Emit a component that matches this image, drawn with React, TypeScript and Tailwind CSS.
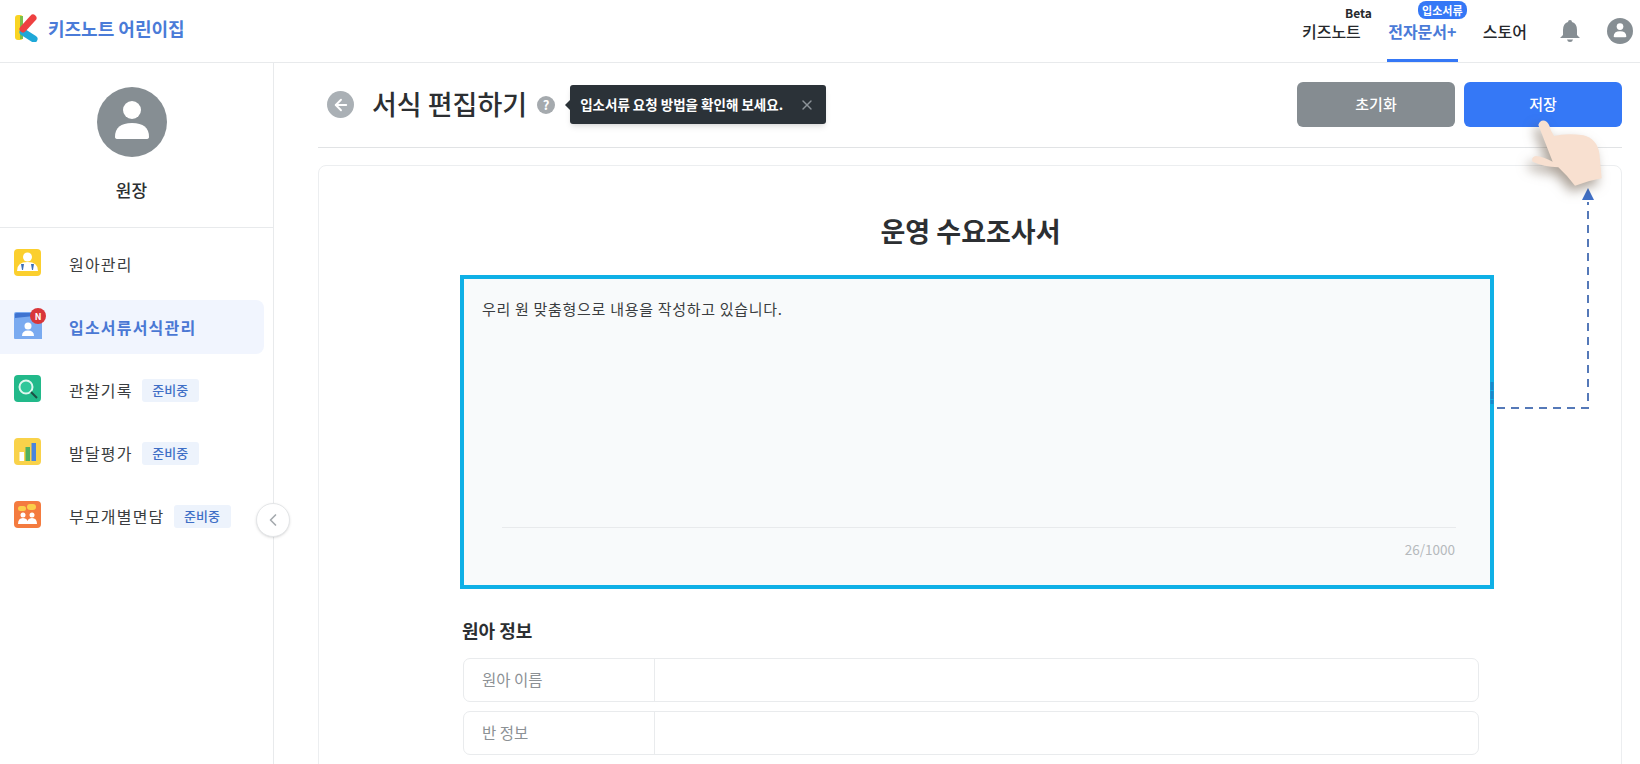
import { ChevronLeft, X, ArrowLeft } from "lucide-react";

const fontClassName = "font-['Noto_Sans_CJK_KR','Noto_Sans',sans-serif]";

function Logo() {
  return (
    <svg width="26" height="28" viewBox="0 0 26 28" className="mr-[8px]">
      <rect x="1" y="1" width="8" height="25" rx="3" fill="#f9d423" />
      <rect x="6" y="2" width="3" height="23" fill="#7cc04b" />
      <path d="M9 18 L20 25" stroke="#1fa8d8" strokeWidth="7" strokeLinecap="round" />
      <path d="M9 15 L19 4" stroke="#ee4040" strokeWidth="7" strokeLinecap="round" />
    </svg>
  );
}

function PersonAvatar({ size }: { size: number }) {
  return (
    <svg width={size} height={size} viewBox="0 0 70 70">
      <circle cx="35" cy="35" r="35" fill="#868e93" />
      <circle cx="35" cy="23" r="9" fill="#fff" />
      <path d="M18 50 Q18 36 35 36 Q52 36 52 50 Q52 52 49 52 L21 52 Q18 52 18 50 Z" fill="#fff" />
    </svg>
  );
}

function ChildIcon() {
  return (
    <svg width="27" height="27" viewBox="0 0 27 27">
      <rect width="27" height="27" rx="4" fill="#fbcf2e" />
      <circle cx="13.5" cy="8" r="4.5" fill="#fff" />
      <path d="M3 22 Q3 13 13.5 13 Q24 13 24 22 Z" fill="#fff" />
      <path d="M7 15 h3 l-1 6 h-1 Z M17 15 h3 l-1 6 h-1 Z" fill="#3d6fb8" />
    </svg>
  );
}

function FolderIcon() {
  return (
    <svg width="28" height="27" viewBox="0 0 28 27" className="overflow-visible">
      <path d="M0 2 Q0 0 2 0 L18 0 L22 4 L28 4 L28 27 L1 27 Q0 27 0 26 Z" fill="#7aaaf0" />
      <path d="M1 6 L1 2 Q1 1 3 1 L17 1 L20 4 Z" fill="#3f73d0" />
      <circle cx="14" cy="14" r="3.500" fill="#fff" />
      <path d="M8 24 Q8 18.500 14 18.500 Q20 18.500 20 24 Z" fill="#fff" />
      <circle cx="24" cy="4" r="8" fill="#d9363a" />
      <text x="24" y="7.500" textAnchor="middle" fontSize="9" fontWeight="700" fill="#fff">
        N
      </text>
    </svg>
  );
}

function SearchIcon() {
  return (
    <svg width="27" height="27" viewBox="0 0 27 27">
      <rect width="27" height="27" rx="4" fill="#22b98a" />
      <circle cx="12" cy="12" r="6.500" fill="#2fc79a" stroke="#dff7ef" strokeWidth="2" />
      <path d="M17 17 L23 23" stroke="#1d4f45" strokeWidth="2" />
    </svg>
  );
}

function ChartIcon() {
  return (
    <svg width="27" height="27" viewBox="0 0 27 27">
      <rect width="27" height="27" rx="4" fill="#f9d24a" />
      <rect x="5.500" y="14" width="4.500" height="9" fill="#fff" />
      <rect x="11.500" y="9" width="4.500" height="14" fill="#4fb060" />
      <rect x="17.500" y="5" width="4.500" height="18" fill="#4a84dc" />
    </svg>
  );
}

function ParentIcon() {
  return (
    <svg width="27" height="27" viewBox="0 0 27 27">
      <rect width="27" height="27" rx="4" fill="#f47b3f" />
      <rect x="4" y="5" width="8" height="5" rx="2.500" fill="#fbcf4a" />
      <rect x="13" y="3" width="9" height="6" rx="3" fill="#fbcf4a" />
      <circle cx="9" cy="14" r="2.500" fill="#fff" />
      <circle cx="18" cy="14" r="2.500" fill="#fff" />
      <path d="M4 23 Q4 17 9 17 Q14 17 14 23 Z M13 23 Q13 17 18 17 Q23 17 23 23 Z" fill="#fff" />
    </svg>
  );
}

function SoonBadge() {
  return (
    <span className="ml-[9px] flex h-[23px] w-[57px] items-center justify-center rounded-[3px] bg-[#edf3fc] text-[13px] font-medium text-[#3f6fc6]">
      준비중
    </span>
  );
}

function NavItem({ icon, label, active, soon }: { icon: React.ReactNode; label: string; active?: boolean; soon?: boolean }) {
  return (
    <div className={`flex h-[54px] w-[264px] items-center rounded-r-[8px] pl-[14px] ${active ? "bg-[#f1f5fe]" : ""}`}>
      <div className="mb-[4px] flex w-[55px] items-center">{icon}</div>
      <span className={`text-[16px] tracking-[1.2px] ${active ? "font-bold text-[#4a78d4]" : "text-[#3a3d40]"}`}>{label}</span>
      {soon && <SoonBadge />}
    </div>
  );
}

function FieldRow({ label }: { label: string }) {
  return (
    <div className="flex h-[44px] w-[1016px] rounded-[7px] border border-[#e9ebed]">
      <div className="flex w-[191px] items-center border-r border-[#e9ebed] pl-[18px] text-[15.5px] text-[#8c9195]">{label}</div>
      <div className="flex-1" />
    </div>
  );
}

function Hand() {
  return (
    <svg width="115" height="95" viewBox="0 0 345 285" className="absolute left-[1500px] top-[110px] drop-shadow-[-4px_6px_6px_rgba(90,70,50,0.5)]">
      <path
        d="M115 45 Q120 28 135 32 Q148 38 152 60 L162 78 Q200 68 250 76 Q290 85 298 130 L305 205 Q265 212 225 227 Q205 200 175 172 Q130 170 98 155 Q92 142 108 138 Q130 140 158 155 Z"
        fill="#f8e0d0"
      />
    </svg>
  );
}

function Connector() {
  return (
    <svg width="110" height="240" viewBox="0 0 110 240" className="absolute left-[1490px] top-[180px]">
      <path d="M7 228 H98 V22" fill="none" stroke="#5579b8" strokeWidth="2" strokeDasharray="8 6" />
      <path d="M92 20 L98 8 L104 20 Z" fill="#3f6fc6" />
      <path d="M2 202 V224" stroke="#1d86c8" strokeWidth="3" strokeDasharray="8 1" />
    </svg>
  );
}

export default function App() {
  return (
    <div className={`relative flex h-[764px] w-[1640px] flex-col overflow-hidden bg-white ${fontClassName}`}>
      <header className="flex h-[63px] shrink-0 items-center justify-between border-b border-[#e8eaec] pl-[14px] pr-[7px]">
        <div className="flex items-center pb-[6px]">
          <Logo />
          <span className="text-[18px] font-bold text-[#4a7bd8]">키즈노트 어린이집</span>
        </div>
        <div className="flex h-full items-center">
          <div className="relative mr-[26px] text-[16px] font-medium text-[#26292c]">
            키즈노트
            <span className="absolute right-[-11px] top-[-14px] text-[12px] font-bold leading-[16px]">Beta</span>
          </div>
          <div className="relative flex h-full w-[71px] items-center justify-center border-b-[3px] border-[#3578f6] pt-[3px] text-[16px] font-bold text-[#4a7bd8]">
            전자문서+
            <span className="absolute left-[31px] top-[1px] flex h-[18px] w-[49px] items-center justify-center rounded-[8px] bg-[#3578f6] text-[11px] font-bold text-white">
              입소서류
            </span>
          </div>
          <div className="ml-[25px] mr-[32px] text-[16px] font-medium text-[#26292c]">스토어</div>
          <svg width="22" height="24" viewBox="0 0 22 24" className="mr-[26px]">
            <path d="M11 1 Q13 1 13 3 Q18 4.500 18 11 L18 16 L21 19 L1 19 L4 16 L4 11 Q4 4.500 9 3 Q9 1 11 1 Z M8 20.500 H14 Q13.500 23 11 23 Q8.500 23 8 20.500 Z" fill="#868e93" />
          </svg>
          <PersonAvatar size={26} />
        </div>
      </header>

      <div className="flex min-h-0 flex-1">
        <aside className="relative w-[274px] shrink-0 border-r border-[#e8eaec]">
          <div className="flex h-[165px] flex-col items-center border-b border-[#e8eaec] pr-[10px] pt-[24px]">
            <PersonAvatar size={70} />
            <div className="mt-[20px] text-[17px] font-medium text-[#2c2f32]">원장</div>
          </div>
          <nav className="flex flex-col gap-[9px] pt-[9px]">
            <NavItem icon={<ChildIcon />} label="원아관리" />
            <NavItem icon={<FolderIcon />} label="입소서류서식관리" active />
            <NavItem icon={<SearchIcon />} label="관찰기록" soon />
            <NavItem icon={<ChartIcon />} label="발달평가" soon />
            <NavItem icon={<ParentIcon />} label="부모개별면담" soon />
          </nav>
          <button className="absolute left-[256px] top-[440px] flex h-[34px] w-[34px] items-center justify-center rounded-full border border-[#e4e6e8] bg-white text-[#a5aaae] shadow-sm">
            <ChevronLeft size={20} />
          </button>
        </aside>

        <main className="min-w-0 flex-1 pl-[44px] pr-[18px]">
          <div className="flex h-[85px] items-center justify-between border-b border-[#e1e3e5] pb-[1px]">
            <div className="flex items-center pl-[9px]">
              <div className="flex h-[27px] w-[27px] items-center justify-center rounded-full bg-[#aab0b5] text-white">
                <ArrowLeft size={18} strokeWidth={2.500} />
              </div>
              <h1 className="ml-[18px] text-[27px] font-medium text-[#2c2f32]">서식 편집하기</h1>
              <div className="ml-[10px] flex h-[18px] w-[18px] items-center justify-center rounded-full bg-[#a5aaae] text-[13px] font-bold text-white">?</div>
              <div className="relative ml-[15px] flex h-[39px] w-[256px] items-center justify-between rounded-[3px] bg-[#2b3238] pl-[10px] pr-[11px] text-[13.5px] font-bold text-white shadow-md">
                <span className="absolute left-[-5px] top-[15px] h-0 w-0 border-y-[5px] border-r-[5px] border-y-transparent border-r-[#2b3238]" />
                입소서류 요청 방법을 확인해 보세요.
                <X size={16} className="text-[#8d9399]" />
              </div>
            </div>
            <div className="flex gap-[9px]">
              <button className="h-[45px] w-[158px] rounded-[6px] bg-[#858c91] text-[15px] font-medium text-white">초기화</button>
              <button className="h-[45px] w-[158px] rounded-[6px] bg-[#3578f6] text-[15px] font-medium text-white">저장</button>
            </div>
          </div>

          <section className="mt-[17px] h-[640px] rounded-[8px] border border-[#eceef0] pl-[141px]">
            <h2 className="mt-[46px] w-[1021px] text-center text-[27px] font-bold leading-[38px] text-[#2c2f32]">운영 수요조사서</h2>
            <div className="mt-[25px] flex h-[314px] w-[1034px] flex-col border-[4px] border-[#0fb0e6] bg-[#f8fafb] pl-[18px] pr-[34px]">
              <p className="mt-[20px] text-[15px] leading-[20px] tracking-[0.7px] text-[#3a3d40]">우리 원 맞춤형으로 내용을 작성하고 있습니다.</p>
              <div className="ml-[20px] mt-auto border-t border-[#e8eaec] pt-[11px] pr-[1px] text-right text-[13.5px] leading-[20px] text-[#b5b9bc]">26/1000</div>
              <div className="h-[26px]" />
            </div>
            <h3 className="ml-[2px] mt-[29px] text-[18px] font-bold leading-[25px] text-[#2c2f32]">원아 정보</h3>
            <div className="ml-[3px] mt-[15px] flex flex-col gap-[9px]">
              <FieldRow label="원아 이름" />
              <FieldRow label="반 정보" />
            </div>
          </section>
        </main>
      </div>

      <Connector />
      <Hand />
    </div>
  );
}
